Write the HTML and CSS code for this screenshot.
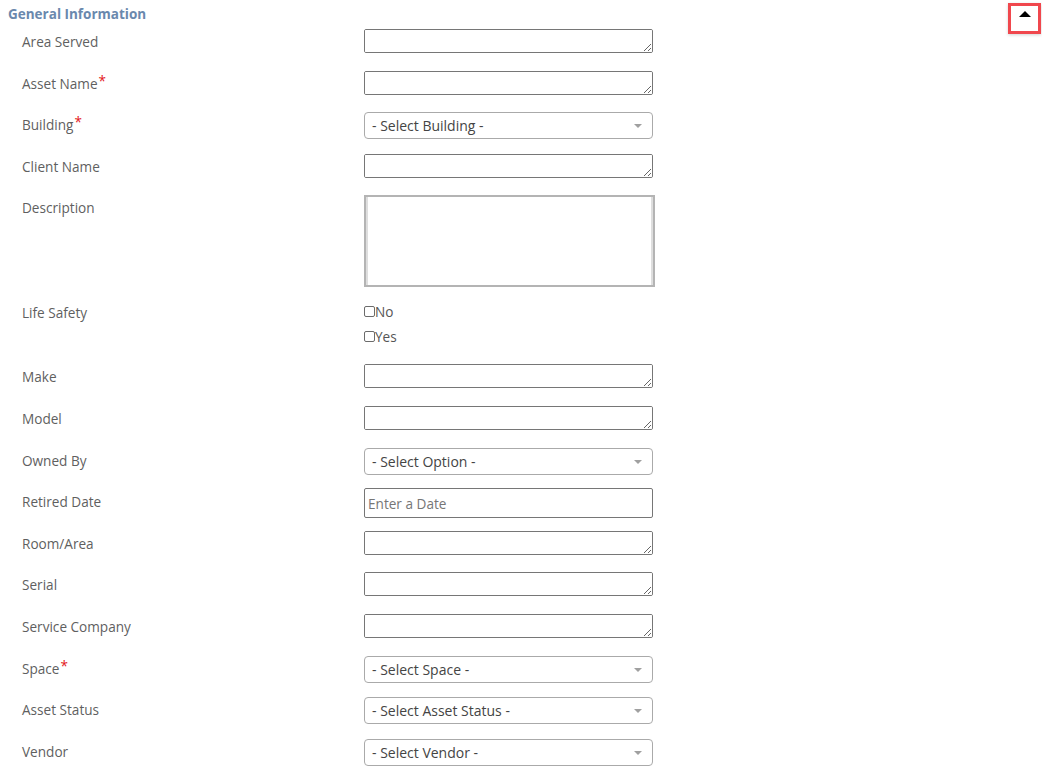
FILE: index.html
```html
<!DOCTYPE html>
<html>
<head>
<meta charset="utf-8">
<link rel="stylesheet" href="styles.css">
</head>
<body>
<div class="section">
  <div class="section-head">
    <span class="section-title">General Information</span>
    <button class="toggle" type="button" aria-label="Collapse"><span class="tri"></span></button>
  </div>
  <div class="form">
    <div class="row"><label class="lbl">Area Served</label><textarea class="ta"></textarea></div>
    <div class="row"><label class="lbl">Asset Name<span class="req">*</span></label><textarea class="ta"></textarea></div>
    <div class="row"><label class="lbl">Building<span class="req">*</span></label><div class="sel"><span>- Select Building -</span><i class="arrow"></i></div></div>
    <div class="row"><label class="lbl">Client Name</label><textarea class="ta"></textarea></div>
    <div class="row row-desc"><label class="lbl">Description</label><textarea class="desc"></textarea></div>
    <div class="row row-check"><label class="lbl">Life Safety</label>
      <div class="checks">
        <label class="chk"><input type="checkbox">No</label>
        <label class="chk"><input type="checkbox">Yes</label>
      </div>
    </div>
    <div class="row"><label class="lbl">Make</label><textarea class="ta"></textarea></div>
    <div class="row"><label class="lbl">Model</label><textarea class="ta"></textarea></div>
    <div class="row"><label class="lbl">Owned By</label><div class="sel"><span>- Select Option -</span><i class="arrow"></i></div></div>
    <div class="row"><label class="lbl">Retired Date</label><input class="date" type="text" placeholder="Enter a Date"></div>
    <div class="row"><label class="lbl">Room/Area</label><textarea class="ta"></textarea></div>
    <div class="row"><label class="lbl">Serial</label><textarea class="ta"></textarea></div>
    <div class="row"><label class="lbl">Service Company</label><textarea class="ta"></textarea></div>
    <div class="row"><label class="lbl">Space<span class="req">*</span></label><div class="sel"><span>- Select Space -</span><i class="arrow"></i></div></div>
    <div class="row"><label class="lbl">Asset Status</label><div class="sel"><span>- Select Asset Status -</span><i class="arrow"></i></div></div>
    <div class="row"><label class="lbl">Vendor</label><div class="sel"><span>- Select Vendor -</span><i class="arrow"></i></div></div>
  </div>
</div>
</body>
</html>
```
FILE: styles.css
```css
html, body {
  margin: 0;
  padding: 0;
  background: #fff;
  overflow: hidden;
}
body {
  font-family: "Open Sans", "Liberation Sans", sans-serif;
  font-size: 13.6px;
  color: #555;
}
.section-head {
  display: flex;
  justify-content: space-between;
  align-items: flex-start;
  height: 29px;
  padding-left: 8px;
  padding-right: 1px;
}
.section-title {
  margin-top: 5px;
  line-height: 18px;
  font-weight: 700;
  font-size: 13.5px;
  color: #6a88ad;
}
.toggle {
  margin-top: 3px;
  width: 33px;
  height: 31px;
  border: 3px solid #f0474d;
  background: #fff;
  box-shadow: 0 1px 3px rgba(0,0,0,0.18);
  padding: 0;
  display: flex;
  justify-content: center;
  align-items: flex-start;
}
.tri {
  margin-top: 5px;
  width: 0;
  height: 0;
  border-left: 6px solid transparent;
  border-right: 6px solid transparent;
  border-bottom: 6px solid #000;
}
.form {
  padding-left: 22px;
}
.row {
  display: flex;
  align-items: flex-start;
  height: 41.6px;
}
.lbl {
  width: 342px;
  flex: none;
  margin-top: 4px;
  line-height: 18px;
  color: #5f5f5f;
}
.req {
  color: #e3151a;
  position: relative;
  top: -3px;
  margin-left: 1px;
}
.ta {
  box-sizing: border-box;
  width: 289px;
  height: 24px;
  border: 1px solid #767676;
  border-radius: 2px;
  margin: 0;
  padding: 2px;
  font: inherit;
  background: #fff;
}
.row-desc {
  height: 105px;
}
.desc {
  box-sizing: border-box;
  width: 291px;
  height: 92px;
  margin: 0;
  border: 2px solid #b4b4b4;
  box-shadow: inset 2px 0 0 #dedede, inset -2px 0 0 #dedede;
  resize: none;
  font: inherit;
}
.row-check {
  height: 64px;
}
.checks {
  display: flex;
  flex-direction: column;
  margin-top: -1px;
}
.chk {
  display: flex;
  align-items: center;
  height: 25px;
  line-height: 18px;
  color: #555;
}
.chk input {
  appearance: none;
  -webkit-appearance: none;
  width: 11px;
  height: 11px;
  margin: 0;
  border: 1px solid #6b6b6b;
  border-radius: 2px;
  background: #fff;
  box-sizing: border-box;
}
.sel {
  box-sizing: border-box;
  width: 289px;
  height: 27px;
  border: 1px solid #aaa;
  border-radius: 4px;
  display: flex;
  align-items: center;
  justify-content: space-between;
  padding: 0 10px 0 7px;
  color: #444;
  font-size: 14px;
}
.arrow {
  width: 0;
  height: 0;
  border-left: 4px solid transparent;
  border-right: 4px solid transparent;
  border-top: 4px solid #a0a0a0;
  margin-top: 1px;
}
.date {
  box-sizing: border-box;
  width: 289px;
  height: 30px;
  margin: 0;
  margin-top: -1px;
  border: 1px solid #767676;
  border-radius: 2px;
  padding: 0 3px;
  font: inherit;
}
.date::placeholder {
  color: #767676;
}
```
